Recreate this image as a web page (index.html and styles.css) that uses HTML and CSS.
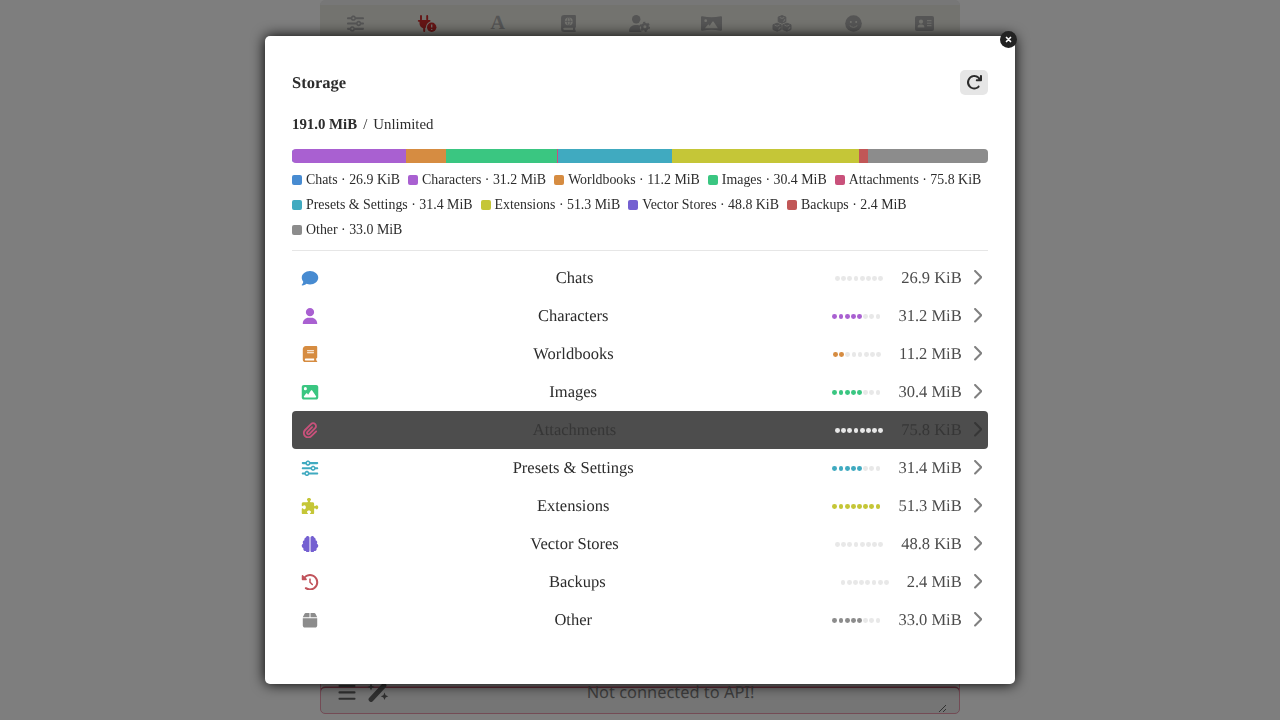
FILE: index.html
```
<!DOCTYPE html>
<html>
<head>
    <meta charset="utf-8">
    <title>Storage</title>
    <link rel="stylesheet" href="styles.css">
</head>
<body>
    <svg class="sprite">
        <symbol id="i-sliders" viewBox="0 0 512 512"><path d="M0 416c0 17.700 14.300 32 32 32l54.700 0c12.300 28.300 40.500 48 73.300 48s61-19.700 73.300-48L480 448c17.700 0 32-14.300 32-32s-14.300-32-32-32l-246.700 0c-12.300-28.300-40.500-48-73.300-48s-61 19.700-73.300 48L32 384c-17.700 0-32 14.300-32 32zm128 0a32 32 0 1 1 64 0 32 32 0 1 1 -64 0zM320 256a32 32 0 1 1 64 0 32 32 0 1 1 -64 0zm32-80c-32.800 0-61 19.700-73.300 48L32 224c-17.700 0-32 14.300-32 32s14.300 32 32 32l246.700 0c12.300 28.300 40.500 48 73.300 48s61-19.700 73.300-48l54.700 0c17.700 0 32-14.300 32-32s-14.300-32-32-32l-54.700 0c-12.300-28.300-40.500-48-73.300-48zM192 128a32 32 0 1 1 0-64 32 32 0 1 1 0 64zm73.300-64C253 35.700 224.800 16 192 16s-61 19.700-73.300 48L32 64C14.300 64 0 78.300 0 96s14.300 32 32 32l86.700 0c12.300 28.300 40.500 48 73.300 48s61-19.700 73.300-48L480 128c17.700 0 32-14.300 32-32s-14.300-32-32-32L265.300 64z"/></symbol>
        <symbol id="i-chat" viewBox="0 0 512 512"><path d="M512 240c0 114.900-114.600 208-256 208c-37.100 0-72.300-6.400-104.100-17.900c-11.900 8.700-31.300 20.600-54.300 30.600C73.600 471.100 44.700 480 16 480c-6.500 0-12.300-3.900-14.800-9.900c-2.500-6-1.100-12.800 3.400-17.400c8-8 15-18 21.700-28.700c10-16.600 19.500-38.400 21.400-62.900C17.700 326.800 0 285.100 0 240C0 125.100 114.600 32 256 32s256 93.100 256 208z"/></symbol>
        <symbol id="i-user" viewBox="0 0 448 512"><path d="M224 256A128 128 0 1 0 224 0a128 128 0 1 0 0 256zm-45.700 48C79.800 304 0 383.800 0 482.300C0 498.700 13.300 512 29.700 512l388.600 0c16.400 0 29.700-13.300 29.700-29.700C448 383.800 368.200 304 269.700 304l-91.400 0z"/></symbol>
        <symbol id="i-book" viewBox="0 0 448 512"><path d="M96 0C43 0 0 43 0 96L0 416c0 53 43 96 96 96l320 0c17.700 0 32-14.300 32-32s-14.300-32-32-32l0-64c17.700 0 32-14.300 32-32l0-320c0-17.700-14.300-32-32-32L96 0zm0 384l256 0 0 64L96 448c-17.700 0-32-14.300-32-32s14.300-32 32-32zm32-240c0-8.800 7.200-16 16-16l192 0c8.800 0 16 7.200 16 16s-7.200 16-16 16l-192 0c-8.800 0-16-7.200-16-16zm16 48l192 0c8.800 0 16 7.200 16 16s-7.200 16-16 16l-192 0c-8.800 0-16-7.200-16-16s7.200-16 16-16z"/></symbol>
        <symbol id="i-image" viewBox="0 0 512 512"><path d="M0 96C0 60.700 28.700 32 64 32l384 0c35.300 0 64 28.700 64 64l0 320c0 35.300-28.700 64-64 64L64 480c-35.300 0-64-28.700-64-64L0 96zM323.800 202.500c-4.500-6.600-11.900-10.500-19.800-10.500s-15.400 3.900-19.800 10.500l-87 127.600L170.700 297c-4.600-5.700-11.500-9-18.700-9s-14.200 3.300-18.700 9l-64 80c-5.800 7.200-6.900 17.100-2.900 25.400s12.400 13.600 21.600 13.600l336 0c8.900 0 17.100-4.900 21.200-12.800s3.600-17.400-1.400-24.700l-120-176zM112 192a48 48 0 1 0 0-96 48 48 0 1 0 0 96z"/></symbol>
        <symbol id="i-clip" viewBox="0 0 448 512"><path d="M364.200 83.800c-24.400-24.400-64-24.400-88.400 0l-184 184c-42.100 42.100-42.100 110.300 0 152.400s110.300 42.100 152.400 0l152-152c10.900-10.900 28.700-10.900 39.600 0s10.900 28.700 0 39.600l-152 152c-64 64-167.600 64-231.600 0s-64-167.600 0-231.600l184-184c46.300-46.300 121.300-46.300 167.600 0s46.300 121.300 0 167.600l-176 176c-28.600 28.600-75 28.600-103.600 0s-28.600-75 0-103.600l144-144c10.900-10.900 28.700-10.900 39.600 0s10.900 28.700 0 39.600l-144 144c-6.700 6.700-6.700 17.700 0 24.400s17.700 6.700 24.400 0l176-176c24.400-24.400 24.400-64 0-88.400z"/></symbol>
        <symbol id="i-puzzle" viewBox="0 0 512 512"><path d="M192 104.800c0-9.200-5.800-17.300-13.200-22.800C167.200 73.300 160 61.300 160 48c0-26.500 28.700-48 64-48s64 21.500 64 48c0 13.300-7.200 25.300-18.800 34c-7.400 5.500-13.200 13.600-13.200 22.800c0 12.800 10.400 23.200 23.200 23.200l56.800 0c26.500 0 48 21.500 48 48l0 56.800c0 12.800 10.400 23.200 23.200 23.200c9.200 0 17.300-5.800 22.800-13.200c8.700-11.600 20.700-18.800 34-18.800c26.500 0 48 28.700 48 64s-21.500 64-48 64c-13.300 0-25.300-7.200-34-18.800c-5.500-7.400-13.600-13.200-22.800-13.200c-12.800 0-23.200 10.400-23.200 23.200L384 464c0 26.500-21.500 48-48 48l-56.800 0c-12.800 0-23.200-10.400-23.200-23.200c0-9.200 5.800-17.300 13.200-22.800c11.600-8.700 18.800-20.700 18.800-34c0-26.500-28.700-48-64-48s-64 21.500-64 48c0 13.300 7.200 25.300 18.800 34c7.400 5.500 13.200 13.600 13.200 22.800c0 12.800-10.400 23.200-23.200 23.200L48 512c-26.500 0-48-21.500-48-48L0 343.200C0 330.400 10.400 320 23.200 320c9.200 0 17.300 5.800 22.800 13.200C54.700 344.800 66.700 352 80 352c26.500 0 48-28.700 48-64s-21.500-64-48-64c-13.300 0-25.300 7.200-34 18.800C40.500 250.200 32.400 256 23.200 256C10.400 256 0 245.600 0 232.800L0 176c0-26.500 21.500-48 48-48l120.800 0c12.800 0 23.200-10.400 23.200-23.200z"/></symbol>
        <symbol id="i-brain" viewBox="0 0 512 512"><path d="M184 0c30.900 0 56 25.100 56 56l0 400c0 30.900-25.100 56-56 56c-28.900 0-52.700-21.900-55.700-50.100c-5.200 1.400-10.700 2.100-16.300 2.100c-35.300 0-64-28.700-64-64c0-7.400 1.300-14.600 3.600-21.200C21.400 367.400 0 338.200 0 304c0-31.900 18.700-59.500 45.800-72.300C37.100 220.800 32 207 32 192c0-30.700 21.600-56.300 50.400-62.600C80.800 123.900 80 118 80 112c0-29.900 20.600-55.100 48.300-62.100C131.300 21.900 155.100 0 184 0zM328 0c28.900 0 52.600 21.900 55.700 49.900c27.800 7 48.300 32.100 48.300 62.100c0 6-.8 11.900-2.400 17.400c28.800 6.200 50.400 31.900 50.400 62.600c0 15-5.100 28.800-13.800 39.700C493.300 244.500 512 272.100 512 304c0 34.200-21.400 63.400-51.600 74.800c2.300 6.600 3.600 13.800 3.600 21.200c0 35.300-28.700 64-64 64c-5.600 0-11.100-.7-16.300-2.100c-3 28.200-26.800 50.100-55.700 50.100c-30.900 0-56-25.100-56-56l0-400c0-30.900 25.100-56 56-56z"/></symbol>
        <symbol id="i-history" viewBox="0 0 512 512"><path d="M75 75L41 41C25.900 25.900 0 36.600 0 57.900L0 168c0 13.300 10.700 24 24 24l110.100 0c21.400 0 32.100-25.900 17-41l-30.800-30.800C155 85.500 203 64 256 64c106 0 192 86 192 192s-86 192-192 192c-40.800 0-78.600-12.700-109.700-34.400c-14.500-10.100-34.400-6.600-44.600 7.900s-6.600 34.400 7.900 44.600C151.200 495 201.700 512 256 512c141.400 0 256-114.600 256-256S397.400 0 256 0C185.300 0 121.300 28.700 75 75zm181 53c-13.300 0-24 10.700-24 24l0 104c0 6.400 2.500 12.500 7 17l72 72c9.400 9.400 24.600 9.400 33.900 0s9.400-24.600 0-33.900l-65-65 0-94.100c0-13.300-10.700-24-24-24z"/></symbol>
        <symbol id="i-box" viewBox="0 0 448 512"><path d="M50.700 58.500L0 160l208 0 0-128L93.700 32C75.500 32 58.900 42.300 50.700 58.500zM240 160l208 0L397.300 58.500C389.100 42.300 372.500 32 354.300 32L240 32l0 128zm208 32L0 192 0 416c0 35.300 28.700 64 64 64l320 0c35.300 0 64-28.700 64-64l0-224z"/></symbol>
        <symbol id="i-chevron" viewBox="0 0 320 512"><path d="M310.600 233.400c12.500 12.500 12.500 32.800 0 45.300l-192 192c-12.500 12.500-32.800 12.500-45.300 0s-12.500-32.800 0-45.300L242.700 256 73.400 86.600c-12.500-12.500-12.500-32.800 0-45.300s32.800-12.500 45.300 0l192 192z"/></symbol>
        <symbol id="i-reload" viewBox="0 0 512 512"><path d="M386.300 160L336 160c-17.700 0-32 14.300-32 32s14.300 32 32 32l128 0c17.700 0 32-14.300 32-32l0-128c0-17.700-14.300-32-32-32s-32 14.300-32 32l0 51.200L414.400 97.600c-87.500-87.500-229.300-87.500-316.800 0s-87.500 229.300 0 316.800s229.300 87.500 316.800 0c12.500-12.500 12.500-32.800 0-45.300s-32.800-12.500-45.300 0c-62.500 62.500-163.800 62.500-226.300 0s-62.500-163.800 0-226.300s163.800-62.500 226.300 0L386.300 160z"/></symbol>
    </svg>

    <div id="top-bar">
        <div class="drawer-icon"><svg width="17" height="17"><use href="#i-sliders"/></svg></div>
        <div class="drawer-icon offline">
            <svg width="20" height="17" viewBox="0 0 20 17">
                <path d="M4 1v3.500M10.200 1v3.500" stroke="currentColor" stroke-width="1.900" stroke-linecap="round"/>
                <path d="M1.700 4.900h10.900a.9.900 0 0 1 0 1.800C10.500 7.800 9 9.700 9 12c0 .8-.8 1-.8 1.400V16a1 1 0 0 1-2 0v-2.700C4 12.700 2.500 10.500 2.500 8.200V6.700h-.8a.9.900 0 0 1 0-1.800z"/>
                <circle cx="14.700" cy="12.200" r="4.700"/>
                <path d="M14.700 9.600v2.800M14.700 14v.9" stroke="#73736f" stroke-width="1.300"/>
            </svg>
        </div>
        <div class="drawer-icon letter">A</div>
        <div class="drawer-icon">
            <svg width="15" height="17" viewBox="0 0 448 512">
                <path fill-rule="evenodd" d="M96 0h320q32 0 32 32v320q0 24-24 32v64q24 8 24 32t-32 32H96Q0 512 0 416V96Q0 0 96 0zM96 384a32 32 0 0 0 0 64h264v-64zM232 72a120 120 0 1 0 0 240 120 120 0 0 0 0-240z"/>
                <g fill="none" stroke="currentColor" stroke-width="22"><ellipse cx="232" cy="192" rx="48" ry="116"/><path d="M116 192h232"/></g>
            </svg>
        </div>
        <div class="drawer-icon">
            <svg width="21" height="17" viewBox="0 0 21 17">
                <circle cx="7.200" cy="4.200" r="4.200"/>
                <path d="M1 17q-1 0-1-1a6 6 0 0 1 6-6h2.500q1.500 0 2.700.6a6 6 0 0 0 1.600 6.400z"/>
                <circle cx="15.900" cy="11.800" r="2.700" fill="none" stroke="currentColor" stroke-width="2.300"/>
                <circle cx="15.900" cy="11.800" r="4.300" fill="none" stroke="currentColor" stroke-width="1.700" stroke-dasharray="2.200 2.300"/>
            </svg>
        </div>
        <div class="drawer-icon">
            <svg width="21" height="17" viewBox="0 0 21 17">
                <path fill-rule="evenodd" d="M1.300 1.300Q10.500 3.200 19.700 1.300q1.300-.2 1.300 1v12.400q0 1.200-1.300 1-9.200-1.900-18.400 0-1.300.2-1.300-1V2.300q0-1.200 1.300-1zM4.700 4.300a1.400 1.400 0 1 0 0 2.800 1.400 1.400 0 0 0 0-2.800zM3.800 13.300h13.100L12.500 6.500h-1L8.700 10.700 7.300 9.200z"/>
            </svg>
        </div>
        <div class="drawer-icon">
            <svg width="20" height="17" viewBox="0 0 20 17">
                <path d="M10 .6l3.800 1.500v4.600L10 8.200 6.200 6.700V2.100zM5.100 8.200l4.100 1.600v4.700l-4.100 1.700L1 14.500V9.800zM14.900 8.200L19 9.800v4.700l-4.100 1.700-4.100-1.700V9.800z" stroke="currentColor" stroke-linejoin="round"/>
                <path d="M7.700 2.500l2.300.9 2.300-.9M10.900 6.400l1.800-.7V4.200M2.700 10.200l2.400 1 2.400-1M6.100 14.300l1.900-.8V12M12.500 10.200l2.400 1 2.400-1M15.900 14.300l1.900-.8V12" fill="none" stroke="#72726e" stroke-width=".9"/>
            </svg>
        </div>
        <div class="drawer-icon">
            <svg width="17" height="17" viewBox="0 0 17 17">
                <circle cx="8.500" cy="8.500" r="8.300"/>
                <g fill="#72726e"><circle cx="5.800" cy="6.900" r="1"/><circle cx="11.200" cy="6.900" r="1"/></g>
                <path d="M5 10.800q3.500 3.400 7 0" fill="none" stroke="#72726e" stroke-linecap="round"/>
            </svg>
        </div>
        <div class="drawer-icon">
            <svg width="19" height="17" viewBox="0 0 19 17">
                <rect y="1" width="19" height="15" rx="2"/>
                <g fill="#72726e"><circle cx="6" cy="6.700" r="2.100"/><path d="M2.600 12.600q0-3 2.700-3h1.400q2.700 0 2.700 3z"/></g>
                <path d="M12 5.700h4.500M12 8.200h4.500M12 10.700h4.500" stroke="#72726e"/>
            </svg>
        </div>
    </div>

    <div id="send-form">
        <svg class="menu-icon" width="18" height="18" viewBox="0 0 18 18"><path d="M1.500 3.100h15M1.500 9.400h15M1.500 15.700h15" stroke="currentColor" stroke-width="2.100" stroke-linecap="round"/></svg>
        <svg class="wand-icon" width="22" height="20" viewBox="0 0 22 20">
            <path d="M4 17.500L17 3.500" stroke="currentColor" stroke-width="4.800" stroke-linecap="round"/>
            <path d="M17.500 10.500l1.100 2.700 2.700 1.100-2.700 1.100-1.100 2.700-1.100-2.700-2.700-1.100 2.700-1.100zM4 1.500l1 2.500L7.500 5 5 6 4 8.500 3 6 .5 5 3 4z"/>
        </svg>
        <div class="send-text">Not connected to API!</div>
        <svg class="grip" width="9" height="9" viewBox="0 0 9 9"><path d="M1 8L8 1M5 8l3-3" stroke="currentColor"/></svg>
    </div>

    <div id="overlay">
        <div id="storage-dialog">
            <button class="close-button"><svg width="7" height="7" viewBox="0 0 7 7"><path d="M1.500 1.500l4 4M5.500 1.500l-4 4" stroke="#fff" stroke-width="1.700" stroke-linecap="round"/></svg></button>

            <div class="storage-header">
                <b>Storage</b>
                <button class="refresh-button"><svg width="16.500" height="16.500"><use href="#i-reload"/></svg></button>
            </div>

            <div class="usage"><b>191.0 MiB</b><span>/</span>Unlimited</div>

            <div class="usage-bar">
                <div class="chats" style="width: 0.014%"></div>
                <div class="characters" style="width: 16.34%"></div>
                <div class="worldbooks" style="width: 5.8%"></div>
                <div class="images" style="width: 15.92%"></div>
                <div class="attachments" style="width: 0.1%"></div>
                <div class="presets" style="width: 16.44%"></div>
                <div class="extensions" style="width: 26.86%"></div>
                <div class="vectors" style="width: 0.025%"></div>
                <div class="backups" style="width: 1.26%"></div>
                <div class="other" style="width: 17.28%"></div>
            </div>

            <div class="legend">
                <span><i class="chats"></i>Chats · 26.9 KiB</span>
                <span><i class="characters"></i>Characters · 31.2 MiB</span>
                <span><i class="worldbooks"></i>Worldbooks · 11.2 MiB</span>
                <span><i class="images"></i>Images · 30.4 MiB</span>
                <span><i class="attachments"></i>Attachments · 75.8 KiB</span>
                <span><i class="presets"></i>Presets &amp; Settings · 31.4 MiB</span>
                <span><i class="extensions"></i>Extensions · 51.3 MiB</span>
                <span><i class="vectors"></i>Vector Stores · 48.8 KiB</span>
                <span><i class="backups"></i>Backups · 2.4 MiB</span>
                <span><i class="other"></i>Other · 33.0 MiB</span>
            </div>

            <div class="category-list">
                <div class="category chats-row">
                    <svg class="icon"><use href="#i-chat"/></svg>
                    <div class="name">Chats</div>
                    <div class="dots"><i></i><i></i><i></i><i></i><i></i><i></i><i></i><i></i></div>
                    <div class="size">26.9 KiB</div>
                    <svg class="chevron"><use href="#i-chevron"/></svg>
                </div>
                <div class="category characters-row">
                    <svg class="icon"><use href="#i-user"/></svg>
                    <div class="name">Characters</div>
                    <div class="dots"><i class="on"></i><i class="on"></i><i class="on"></i><i class="on"></i><i class="on"></i><i></i><i></i><i></i></div>
                    <div class="size">31.2 MiB</div>
                    <svg class="chevron"><use href="#i-chevron"/></svg>
                </div>
                <div class="category worldbooks-row">
                    <svg class="icon"><use href="#i-book"/></svg>
                    <div class="name">Worldbooks</div>
                    <div class="dots"><i class="on"></i><i class="on"></i><i></i><i></i><i></i><i></i><i></i><i></i></div>
                    <div class="size">11.2 MiB</div>
                    <svg class="chevron"><use href="#i-chevron"/></svg>
                </div>
                <div class="category images-row">
                    <svg class="icon"><use href="#i-image"/></svg>
                    <div class="name">Images</div>
                    <div class="dots"><i class="on"></i><i class="on"></i><i class="on"></i><i class="on"></i><i class="on"></i><i></i><i></i><i></i></div>
                    <div class="size">30.4 MiB</div>
                    <svg class="chevron"><use href="#i-chevron"/></svg>
                </div>
                <div class="category attachments-row active">
                    <svg class="icon"><use href="#i-clip"/></svg>
                    <div class="name">Attachments</div>
                    <div class="dots"><i></i><i></i><i></i><i></i><i></i><i></i><i></i><i></i></div>
                    <div class="size">75.8 KiB</div>
                    <svg class="chevron"><use href="#i-chevron"/></svg>
                </div>
                <div class="category presets-row">
                    <svg class="icon"><use href="#i-sliders"/></svg>
                    <div class="name">Presets &amp; Settings</div>
                    <div class="dots"><i class="on"></i><i class="on"></i><i class="on"></i><i class="on"></i><i class="on"></i><i></i><i></i><i></i></div>
                    <div class="size">31.4 MiB</div>
                    <svg class="chevron"><use href="#i-chevron"/></svg>
                </div>
                <div class="category extensions-row">
                    <svg class="icon"><use href="#i-puzzle"/></svg>
                    <div class="name">Extensions</div>
                    <div class="dots"><i class="on"></i><i class="on"></i><i class="on"></i><i class="on"></i><i class="on"></i><i class="on"></i><i class="on"></i><i class="on"></i></div>
                    <div class="size">51.3 MiB</div>
                    <svg class="chevron"><use href="#i-chevron"/></svg>
                </div>
                <div class="category vectors-row">
                    <svg class="icon"><use href="#i-brain"/></svg>
                    <div class="name">Vector Stores</div>
                    <div class="dots"><i></i><i></i><i></i><i></i><i></i><i></i><i></i><i></i></div>
                    <div class="size">48.8 KiB</div>
                    <svg class="chevron"><use href="#i-chevron"/></svg>
                </div>
                <div class="category backups-row">
                    <svg class="icon"><use href="#i-history"/></svg>
                    <div class="name">Backups</div>
                    <div class="dots"><i></i><i></i><i></i><i></i><i></i><i></i><i></i><i></i></div>
                    <div class="size">2.4 MiB</div>
                    <svg class="chevron"><use href="#i-chevron"/></svg>
                </div>
                <div class="category other-row">
                    <svg class="icon"><use href="#i-box"/></svg>
                    <div class="name">Other</div>
                    <div class="dots"><i class="on"></i><i class="on"></i><i class="on"></i><i class="on"></i><i class="on"></i><i></i><i></i><i></i></div>
                    <div class="size">33.0 MiB</div>
                    <svg class="chevron"><use href="#i-chevron"/></svg>
                </div>
            </div>
        </div>
    </div>
</body>
</html>
```

FILE: styles.css
```
* {
    box-sizing: border-box;
}
body {
    margin: 0;
    height: 720px;
    overflow: hidden;
    background: #7e7e7e;
    color: #2c2c2c;
    font-family: "Liberation Serif", serif;
    font-size: 15px;
    text-rendering: geometricPrecision;
    display: flex;
    flex-direction: column;
    justify-content: space-between;
    align-items: center;
}
svg {
    fill: currentColor;
    flex-shrink: 0;
}
.sprite {
    position: absolute;
    width: 0;
    height: 0;
}
#top-bar {
    width: 640px;
    height: 41px;
    border-top: 5px solid #777;
    border-radius: 5px 5px 0 0;
    background: #73736f;
    color: #555;
    display: grid;
    grid-template-columns: repeat(9, 1fr);
}
.drawer-icon {
    display: flex;
    align-items: center;
    justify-content: center;
}
.offline {
    color: #651515;
}
.letter {
    font-size: 20px;
    font-weight: bold;
}
#send-form {
    width: 640px;
    height: 44px;
    margin-bottom: 6px;
    padding: 0 12px 0 17px;
    border: 1px solid #734b55;
    border-radius: 5px;
    background: #757575;
    color: #303030;
    display: flex;
    align-items: center;
    box-shadow: inset 0 16px 0 -0.500px #757575, inset 0 17px #5e2935;
}
.wand-icon {
    margin-left: 11px;
}
.send-text {
    flex: 1;
    margin-left: 14px;
    padding-bottom: 2px;
    text-align: center;
    color: #3d3d3d;
    font: 16.400px "Noto Sans", sans-serif;
}
.grip {
    align-self: flex-end;
}
#overlay {
    position: fixed;
    inset: 0;
    display: flex;
    align-items: center;
    justify-content: center;
}
#storage-dialog {
    position: relative;
    width: 750px;
    height: 648px;
    padding: 33px 27px 0;
    border-radius: 5px;
    background: #fff;
    box-shadow: 0 0 14px #000;
}
button {
    border: none;
    padding: 0;
    display: flex;
    align-items: center;
    justify-content: center;
}
.close-button {
    position: absolute;
    top: -5px;
    right: -2px;
    width: 17px;
    height: 17px;
    border-radius: 50%;
    background: #222;
}
.storage-header {
    display: flex;
    justify-content: space-between;
    align-items: center;
    height: 27px;
    font-size: 16.500px;
}
.refresh-button {
    width: 28px;
    height: 25px;
    border-radius: 5px;
    background: #e6e6e6;
    color: #2c2c2c;
}
.usage {
    margin-top: 20px;
    font-size: 14.850px;
    line-height: 17px;
    text-rendering: auto;
}
.usage span {
    margin: 0 6px;
}
.usage-bar {
    display: flex;
    height: 14px;
    margin-top: 16px;
    border-radius: 4px;
    overflow: hidden;
    background: #e6e6e6;
}
.legend {
    display: flex;
    flex-wrap: wrap;
    column-gap: 8px;
    row-gap: 9px;
    margin-top: 9px;
    padding-bottom: 12px;
    border-bottom: 1px solid #e6e6e6;
    font-size: 13.880px;
    line-height: 16px;
    text-rendering: auto;
}
.legend span {
    display: flex;
    align-items: center;
    gap: 4px;
}
.legend i {
    width: 10px;
    height: 10px;
    border-radius: 2px;
}
.chats { background: #478bd1; }
.characters { background: #a960d1; }
.worldbooks { background: #d68c41; }
.images { background: #3ac681; }
.attachments { background: #c9517b; }
.presets { background: #40aac0; }
.extensions { background: #c5c637; }
.vectors { background: #7460d1; }
.backups { background: #c15757; }
.other { background: #8c8c8c; }

.category-list {
    margin-top: 8px;
    font-size: 16.500px;
}
.category {
    display: flex;
    align-items: center;
    gap: 10px;
    height: 38px;
    padding: 0 6px 0 8px;
    border-radius: 4px;
}
.category.active {
    background: #4d4d4d;
}
.icon {
    width: 20px;
    height: 16.500px;
}
.name {
    flex: 1;
    text-align: center;
    color: #2c2c2c;
}
.dots {
    display: flex;
    gap: 1.400px;
    margin: 1px 8px 0 6px;
}
.dots i {
    width: 4.800px;
    height: 4.800px;
    border-radius: 50%;
    background: #e8e8e8;
}
.dots .on {
    background: currentColor;
}
.size {
    color: #4b4b4b;
}
.chevron {
    width: 10.300px;
    height: 16.500px;
    margin-bottom: 2px;
    color: #808080;
}
.active .name, .active .size, .active .chevron {
    color: #363636;
}
.chats-row { color: #478bd1; }
.characters-row { color: #a960d1; }
.worldbooks-row { color: #d68c41; }
.images-row { color: #3ac681; }
.attachments-row { color: #c9517b; }
.presets-row { color: #40aac0; }
.extensions-row { color: #c5c637; }
.vectors-row { color: #7460d1; }
.backups-row { color: #c1535b; }
.other-row { color: #8c8c8c; }
```
